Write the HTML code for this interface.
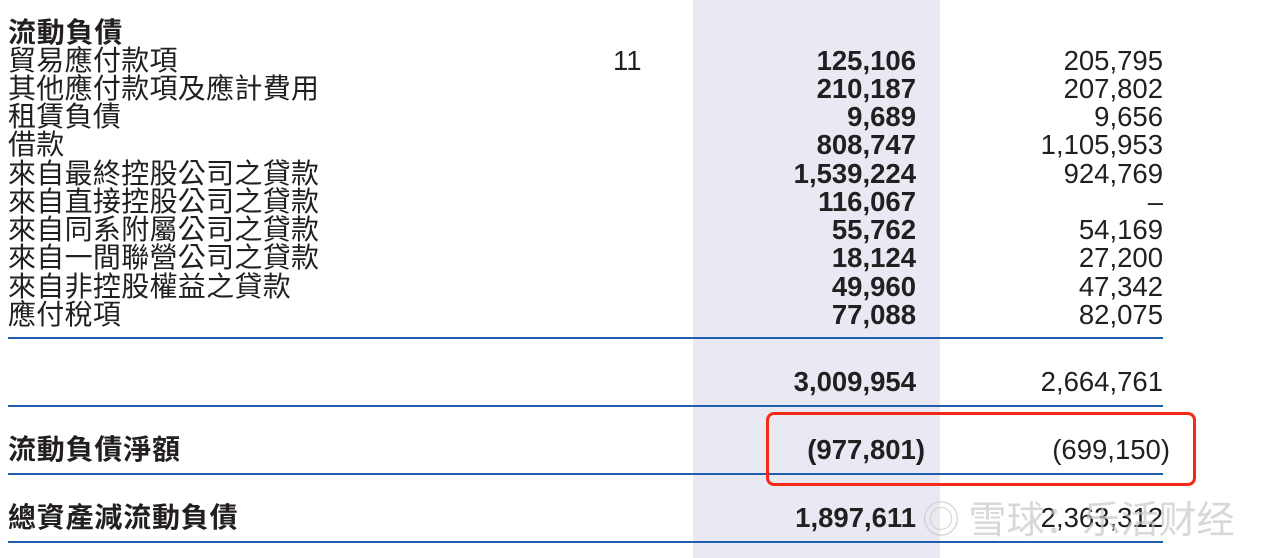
<!DOCTYPE html>
<html><head><meta charset="utf-8"><style>
body{margin:0;width:1268px;height:558px;background:#fff;position:relative;overflow:hidden;font-family:"Liberation Sans","Noto Sans CJK TC",sans-serif;color:#231f20}
.shade{position:absolute;left:693px;top:0;width:247px;height:558px;background:#e9e9f3}
.r{position:absolute;left:0;width:1268px;height:28px;line-height:28px;font-size:27.5px}
.l{position:absolute;left:8px;font-size:28px;letter-spacing:0.3px;white-space:nowrap}
.b{font-weight:bold;letter-spacing:0.8px}
.n1{position:absolute;right:352px;font-weight:bold}
.n2{position:absolute;right:105px}
.note{position:absolute;left:613px}
.line{position:absolute;left:8px;width:1155px;height:2px;background:#1f5fae}
.box{position:absolute;left:766px;top:412px;width:424px;height:68px;border:3px solid #f42a16;border-radius:8px}
.wm{position:absolute;left:922px;top:492px;font-size:38px;color:rgba(200,200,200,.7);font-family:"Noto Sans CJK SC",sans-serif;white-space:nowrap;line-height:50px}
</style></head><body>
<div class="shade"></div>
<div class="r" style="top:19px"><span class="l b">流動負債</span></div>
<div class="r" style="top:47px"><span class="l">貿易應付款項</span><span class="note">11</span><span class="n1">125,106</span><span class="n2">205,795</span></div>
<div class="r" style="top:75px"><span class="l">其他應付款項及應計費用</span><span class="n1">210,187</span><span class="n2">207,802</span></div>
<div class="r" style="top:103px"><span class="l">租賃負債</span><span class="n1">9,689</span><span class="n2">9,656</span></div>
<div class="r" style="top:131px"><span class="l">借款</span><span class="n1">808,747</span><span class="n2">1,105,953</span></div>
<div class="r" style="top:160px"><span class="l">來自最終控股公司之貸款</span><span class="n1">1,539,224</span><span class="n2">924,769</span></div>
<div class="r" style="top:188px"><span class="l">來自直接控股公司之貸款</span><span class="n1">116,067</span><span class="n2">–</span></div>
<div class="r" style="top:216px"><span class="l">來自同系附屬公司之貸款</span><span class="n1">55,762</span><span class="n2">54,169</span></div>
<div class="r" style="top:244px"><span class="l">來自一間聯營公司之貸款</span><span class="n1">18,124</span><span class="n2">27,200</span></div>
<div class="r" style="top:273px"><span class="l">來自非控股權益之貸款</span><span class="n1">49,960</span><span class="n2">47,342</span></div>
<div class="r" style="top:301px"><span class="l">應付稅項</span><span class="n1">77,088</span><span class="n2">82,075</span></div>
<div class="line" style="top:337px"></div>
<div class="r" style="top:368px"><span class="n1">3,009,954</span><span class="n2">2,664,761</span></div>
<div class="line" style="top:405px"></div>
<div class="r" style="top:436px"><span class="l b">流動負債淨額</span><span class="n1" style="right:343px">(977,801)</span><span class="n2" style="right:98px">(699,150)</span></div>
<div class="line" style="top:473px"></div>
<div class="r" style="top:504px"><span class="l b">總資產減流動負債</span><span class="n1">1,897,611</span><span class="n2">2,363,312</span></div>
<div class="line" style="top:541px"></div>
<div class="box"></div>
<div class="wm">◎ 雪球：乐活财经</div>
</body></html>
